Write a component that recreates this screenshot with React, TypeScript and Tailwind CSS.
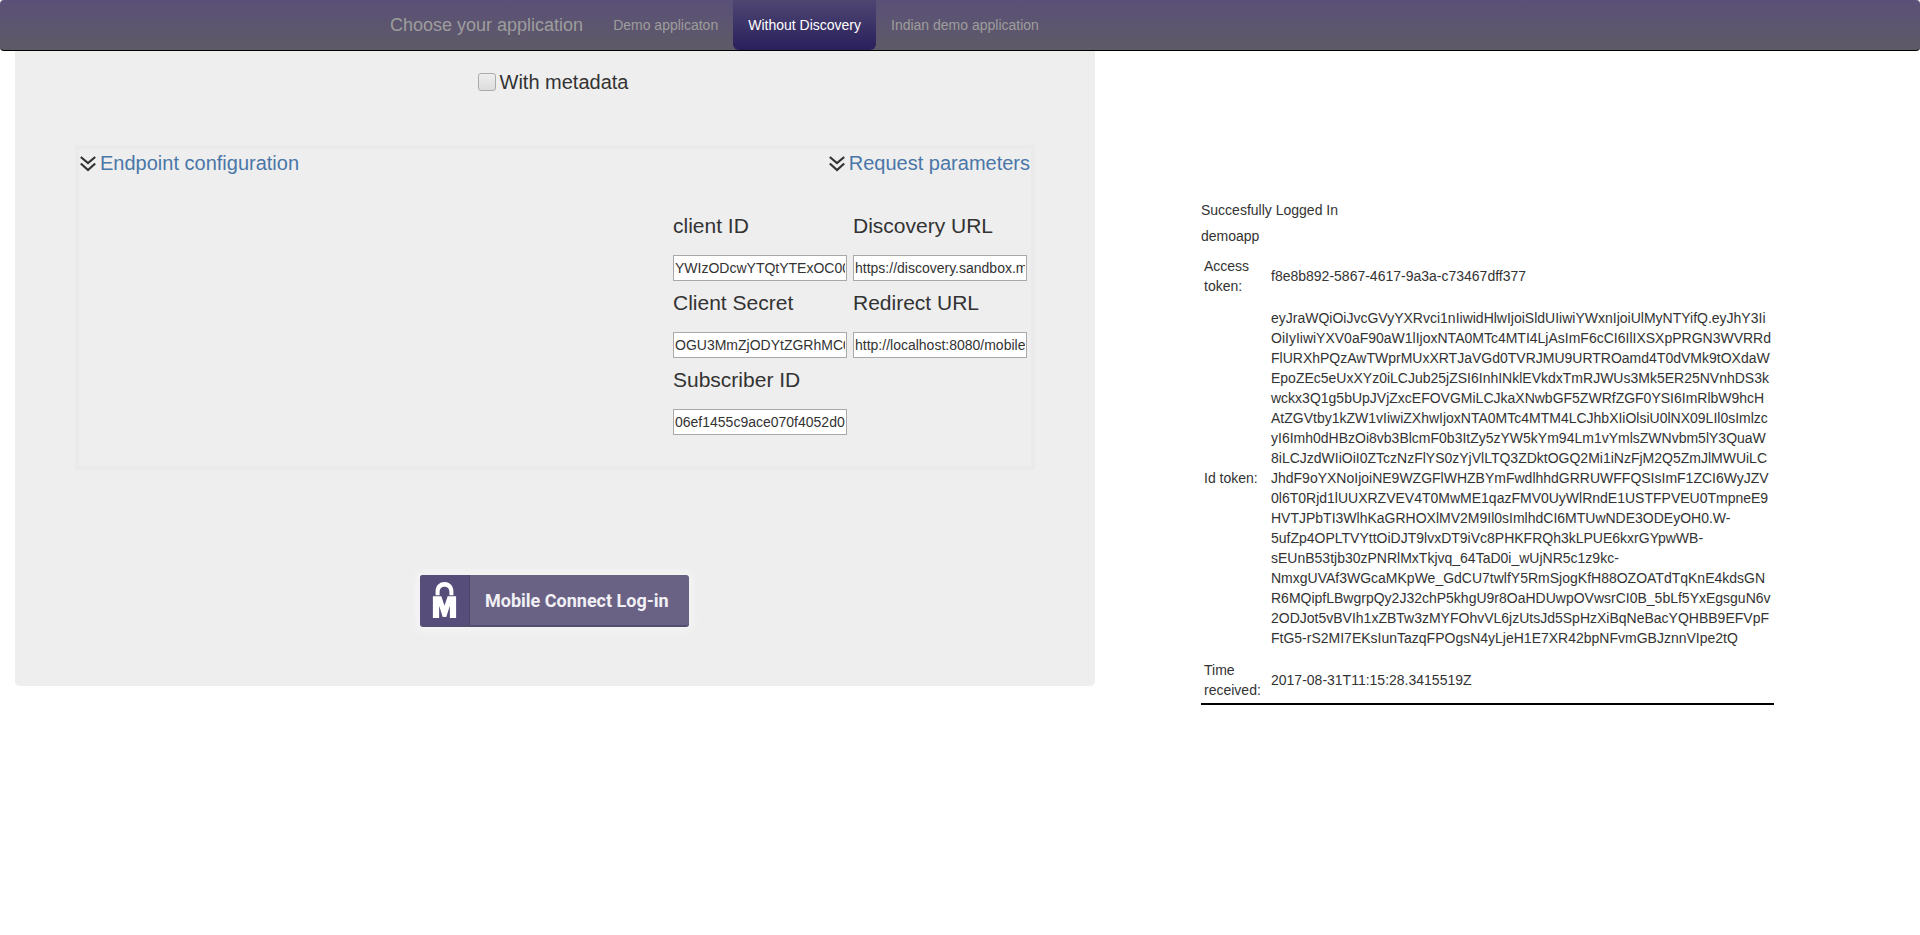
const tokenLines = [
  "eyJraWQiOiJvcGVyYXRvci1nIiwidHlwIjoiSldUIiwiYWxnIjoiUlMyNTYifQ.eyJhY3Ii",
  "OiIyIiwiYXV0aF90aW1lIjoxNTA0MTc4MTI4LjAsImF6cCI6IlIXSXpPRGN3WVRRd",
  "FlURXhPQzAwTWprMUxXRTJaVGd0TVRJMU9URTROamd4T0dVMk9tOXdaW",
  "EpoZEc5eUxXYz0iLCJub25jZSI6InhINklEVkdxTmRJWUs3Mk5ER25NVnhDS3k",
  "wckx3Q1g5bUpJVjZxcEFOVGMiLCJkaXNwbGF5ZWRfZGF0YSI6ImRlbW9hcH",
  "AtZGVtby1kZW1vIiwiZXhwIjoxNTA0MTc4MTM4LCJhbXIiOlsiU0lNX09LIl0sImlzc",
  "yI6Imh0dHBzOi8vb3BlcmF0b3ItZy5zYW5kYm94Lm1vYmlsZWNvbm5lY3QuaW",
  "8iLCJzdWIiOiI0ZTczNzFlYS0zYjVlLTQ3ZDktOGQ2Mi1iNzFjM2Q5ZmJlMWUiLC",
  "JhdF9oYXNoIjoiNE9WZGFlWHZBYmFwdlhhdGRRUWFFQSIsImF1ZCI6WyJZV",
  "0l6T0Rjd1lUUXRZVEV4T0MwME1qazFMV0UyWlRndE1USTFPVEU0TmpneE9",
  "HVTJPbTI3WlhKaGRHOXlMV2M9Il0sImlhdCI6MTUwNDE3ODEyOH0.W-",
  "5ufZp4OPLTVYttOiDJT9lvxDT9iVc8PHKFRQh3kLPUE6kxrGYpwWB-",
  "sEUnB53tjb30zPNRlMxTkjvq_64TaD0i_wUjNR5c1z9kc-",
  "NmxgUVAf3WGcaMKpWe_GdCU7twlfY5RmSjogKfH88OZOATdTqKnE4kdsGN",
  "R6MQipfLBwgrpQy2J32chP5khgU9r8OaHDUwpOVwsrCI0B_5bLf5YxEgsguN6v",
  "2ODJot5vBVIh1xZBTw3zMYFOhvVL6jzUtsJd5SpHzXiBqNeBacYQHBB9EFVpF",
  "FtG5-rS2MI7EKsIunTazqFPOgsN4yLjeH1E7XR42bpNFvmGBJznnVIpe2tQ",
];

const ChevronsIcon = () => (
  <svg width="16" height="17" viewBox="0 0 16 17" fill="none" stroke="#333" strokeWidth="2.2" className="shrink-0">
    <polyline points="0.8,2 8,8 15.2,2" />
    <polyline points="0.8,8.5 8,15 15.2,8.5" />
  </svg>
);

const LockLogo = () => (
  <svg width="25" height="38" viewBox="0 0 28 40" preserveAspectRatio="none" fill="#fff">
    <path d="M4 15 V11 C4 4.5 8.5 1 14 1 C19.5 1 24 4.5 24 11 V15 H19.5 V11.5 C19.5 8 17 6 14 6 C11 6 8.5 8 8.5 11.5 V15 Z" />
    <path d="M1 16 H10.5 L14 26 L17.5 16 H27 V39 H20 V26 L16 38 H12 L8 26 V39 H1 Z" />
  </svg>
);

const Field = ({ label, value }: { label: string; value: string }) => (
  <div className="flex flex-col">
    <label className="h-[51px] pt-[7px] text-[21px] leading-[30px] text-[#333]">{label}</label>
    <input
      readOnly
      value={value}
      className="h-[26px] w-[174px] border border-[#a9a9a9] bg-white px-[1px] text-[14px] text-[#333] outline-none"
    />
  </div>
);

export default function App() {
  return (
    <div className="min-h-[935px] bg-white font-['Liberation_Sans',Arial,sans-serif] text-[14px] text-[#333]">
      {/* top bar */}
      <nav className="h-[51px] rounded-[4px] border-b border-black bg-gradient-to-b from-[#5a5078] to-[#5f5a66]">
        <div className="ml-[375px] flex h-[50px] items-center">
          <a className="px-[15px] text-[18px] text-[#9d9d9d]">Choose your application</a>
          <a className="px-[15px] text-[#9d9d9d]">Demo applicaton</a>
          <a className="flex h-[50px] items-center rounded-b-[6px] bg-gradient-to-b from-[#4f4672] to-[#2a1f5c] px-[15px] text-white">
            Without Discovery
          </a>
          <a className="px-[15px] text-[#9d9d9d]">Indian demo application</a>
        </div>
      </nav>

      <div className="flex items-start">
        {/* left panel */}
        <div className="ml-[15px] h-[635px] w-[1080px] rounded-b-[5px] bg-[#eee] pt-[19px]">
          <div className="flex items-center justify-center gap-[4px] pr-[4px]">
            <span className="h-[18px] w-[18px] rounded-[3px] border border-[#aaa] bg-gradient-to-b from-[#eee] to-[#ddd]" />
            <span className="text-[20px] leading-[24px]">With metadata</span>
          </div>

          <div className="ml-[60px] mt-[51px] h-[325px] w-[960px] border-[4px] border-[#eaeaea] pl-[1px] pr-[1px]">
            <div className="flex items-center justify-between">
              <div className="flex items-center gap-[4px]">
                <ChevronsIcon />
                <span className="text-[20px] leading-[28px] text-[#4a76a8]">Endpoint configuration</span>
              </div>
              <div className="flex items-center gap-[4px]">
                <ChevronsIcon />
                <span className="text-[20px] leading-[28px] text-[#4a76a8]">Request parameters</span>
              </div>
            </div>
            <div className="ml-[593px] mt-[27px] grid grid-cols-[174px_174px] gap-x-[6px]">
              <Field label="client ID" value="YWIzODcwYTQtYTExOC00Mjk1LWE2ZTgtMTI1OTE4NjgxOGU2" />
              <Field label="Discovery URL" value="https://discovery.sandbox.mobileconnect.io/v2/discovery" />
              <Field label="Client Secret" value="OGU3MmZjODYtZGRhMC00Mzk1LWE2ZTgtMTI1OTE4NjgxOGU2" />
              <Field label="Redirect URL" value="http://localhost:8080/mobileconnect.html" />
              <Field label="Subscriber ID" value="06ef1455c9ace070f4052d0" />
            </div>
          </div>

          <div className="ml-[405px] mt-[105px] flex h-[52px] w-[269px] overflow-hidden rounded-[3px] border-b-2 border-[#564e70] bg-[#6a6285] shadow-[0_0_8px_3px_#f6f6f6]">
            <div className="flex w-[50px] items-center justify-center border-r border-[#4e4668] bg-[#574d7a]">
              <LockLogo />
            </div>
            <span className="flex flex-1 items-center pl-[15px] font-['Roboto',sans-serif] text-[18px] font-bold text-[#f1f0f5]">
              Mobile Connect Log-in
            </span>
          </div>
        </div>

        {/* right panel */}
        <div className="ml-[106px] w-[573px] pt-[149px]">
          <p className="mb-[6px] leading-[20px]">Succesfully Logged In</p>
          <p className="mb-[4px] leading-[20px]">demoapp</p>
          <div className="grid grid-cols-[70px_1fr] items-center gap-y-[12px] border-b-[2px] border-black pb-[3px] pt-[6px]">
            <span className="pl-[3px] leading-[20px]">Access<br />token:</span>
            <span className="leading-[20px]">f8e8b892-5867-4617-9a3a-c73467dff377</span>
            <span className="pl-[3px] leading-[20px]">Id token:</span>
            <div className="whitespace-nowrap leading-[20px]">
              {tokenLines.map((line) => (
                <div key={line}>{line}</div>
              ))}
            </div>
            <span className="pl-[3px] leading-[20px]">Time<br />received:</span>
            <span className="leading-[20px]">2017-08-31T11:15:28.3415519Z</span>
          </div>
        </div>
      </div>
    </div>
  );
}
